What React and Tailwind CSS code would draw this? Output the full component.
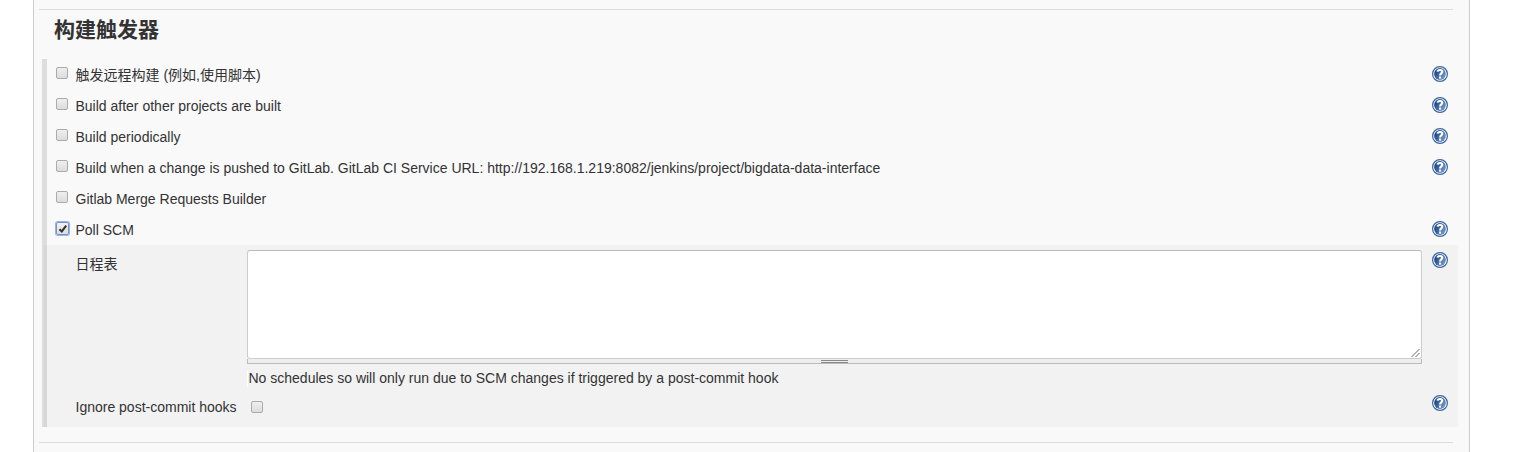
const Help = () => (
  <svg className="block size-4 shrink-0" viewBox="0 0 16 16">
    <defs>
      <linearGradient id="helpFill" x1="0" y1="0.2" x2="1" y2="0.8">
        <stop offset="0.15" stopColor="#204a87" />
        <stop offset="1" stopColor="#7b9fcf" />
      </linearGradient>
    </defs>
    <circle cx="8" cy="8" r="7.4" fill="#fff" stroke="#3a639f" strokeWidth="1.2" />
    <circle cx="8" cy="8" r="5.9" fill="url(#helpFill)" />
    <path d="M5.6 5.6C5.8 3.4 10.3 3.4 10.3 5.8C10.3 7.4 8.1 7.4 8.1 9.4" fill="none" stroke="#fff" strokeWidth="2.1" />
    <rect x="7" y="10.5" width="2.1" height="2.1" fill="#fff" />
  </svg>
);

const Box = ({ checked }) => (
  <span
    className={
      checked
        ? "flex h-[13px] w-[13px] shrink-0 items-center justify-center rounded-[2px] border border-[#7d93bb] bg-linear-to-b from-[#f2f2f2] to-[#dcdcdc] shadow-[0_0_0_1px_#8fb4ef]"
        : "block h-[12px] w-[12px] shrink-0 rounded-[2px] border border-[#ababab] bg-linear-to-b from-[#efefef] to-[#dcdcdc]"
    }
  >
    {checked && (
      <svg className="block size-[10px] shrink-0" viewBox="0 0 10 10">
        <path d="M1.4 5.2L3.8 7.4L8.2 1.7" fill="none" stroke="#333" strokeWidth="2.1" />
      </svg>
    )}
  </span>
);

const triggers = [
  { label: "触发远程构建 (例如,使用脚本)", help: true },
  { label: "Build after other projects are built", help: true },
  { label: "Build periodically", help: true },
  {
    label:
      "Build when a change is pushed to GitLab. GitLab CI Service URL: http://192.168.1.219:8082/jenkins/project/bigdata-data-interface",
    help: true,
  },
  { label: "Gitlab Merge Requests Builder" },
  { label: "Poll SCM", help: true, checked: true },
];

export default function App() {
  return (
    <div className="h-[452px] w-[1517px] overflow-hidden bg-white pl-[33px] font-['Liberation_Sans','Noto_Sans_CJK_SC',sans-serif] text-[14px] leading-[18px] text-[#333]">
      <main className="h-full w-[1437px] border-x border-[#ccc] bg-[#f9f9f9] pt-[9px]">
        <div className="ml-[5px] h-px w-[1414px] bg-[#ddd]" />
        <h2 className="flex h-[49px] items-start pt-[5px] pl-[20px] text-[21px] leading-[30px] font-bold">
          构建触发器
        </h2>
        <section className="ml-[8px] w-[1416px]">
          <div className="flex h-[186px] flex-col border-l-[5px] border-[#ddd]">
            {triggers.map((t) => (
              <div key={t.label} className="flex h-[31px] shrink-0 items-start pt-[7px] pr-[10px] pl-[9px]">
                <div className="w-[19.5px] shrink-0 pt-px">
                  <Box checked={t.checked} />
                </div>
                <label className="grow whitespace-nowrap">{t.label}</label>
                {t.help && <Help />}
              </div>
            ))}
          </div>
          <div className="flex h-[182px] border-l-2 border-[#ddd]">
            <div className="grow border-l-[3px] border-[#d7d7d7] bg-[#f2f2f2]">
              <div className="flex h-[146px] pr-[10px] pl-[28.5px]">
                <div className="w-[171.5px] shrink-0 pt-[10px]">日程表</div>
                <div className="w-[1175px] shrink-0 pt-[5px]">
                  <div className="flex h-[109px] items-end justify-end rounded-[3px] border border-[#ccc] border-t-[#bbb] bg-white">
                    <svg className="block size-[10px]" viewBox="0 0 10 10" fill="none" stroke="#555" strokeWidth="0.9">
                      <path d="M0.5 9L8.5 1M4.5 9L8.5 5" />
                    </svg>
                  </div>
                  <div className="flex h-[5px] flex-col items-center gap-px border border-t-0 border-[#bbb] bg-[#eee] pt-px">
                    <div className="h-px w-[27px] shrink-0 bg-[#888a85]" />
                    <div className="h-px w-[27px] shrink-0 bg-[#888a85]" />
                  </div>
                  <div className="mt-[7px] h-[16px] border-l border-white pl-[0.5px] leading-[14px]">
                    No schedules so will only run due to SCM changes if triggered by a post-commit hook
                  </div>
                </div>
                <div className="ml-[10px] pt-[7px]">
                  <Help />
                </div>
              </div>
              <div className="flex items-start pr-[10px] pl-[28.5px]">
                <div className="w-[175.5px] shrink-0 pt-[7px]">Ignore post-commit hooks</div>
                <div className="grow pt-[10px]">
                  <Box />
                </div>
                <div className="pt-[4px]">
                  <Help />
                </div>
              </div>
            </div>
          </div>
        </section>
        <div className="mt-[15px] ml-[5px] h-px w-[1414px] bg-[#ddd]" />
      </main>
    </div>
  );
}
